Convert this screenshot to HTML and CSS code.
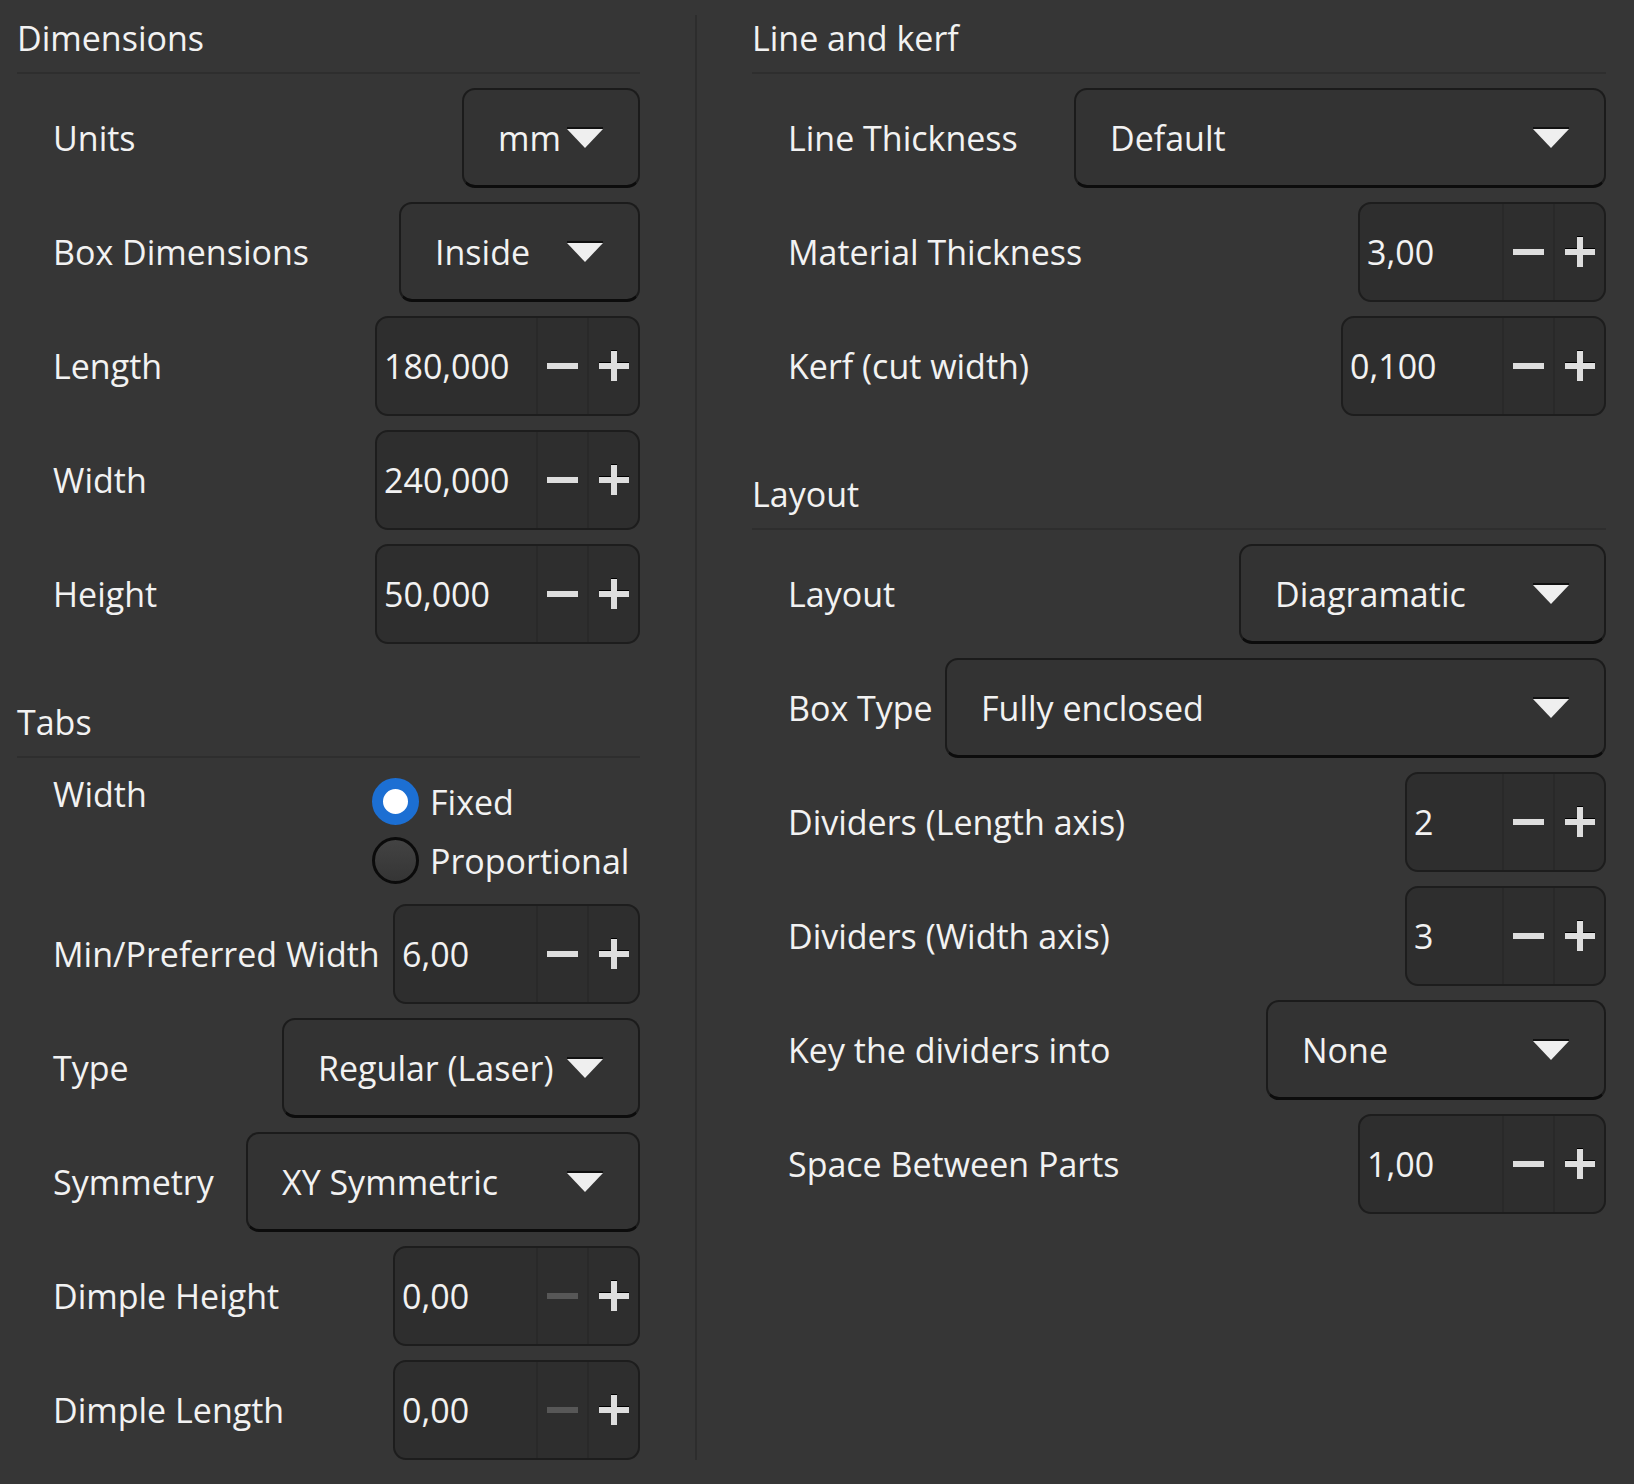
FILE: index.html
```html
<!DOCTYPE html>
<html>
<head>
<meta charset="utf-8">
<link rel="stylesheet" href="styles.css">
</head>
<body>
<div class="page">
  <div class="col col-left">
    <section class="group">
      <div class="group-title">Dimensions</div>
      <div class="rows">
        <div class="row">
          <span class="label">Units</span>
          <div class="combo combo-units"><span class="combo-text">mm</span><svg class="caret" viewBox="0 0 36 22"><rect x="0" y="0" width="36" height="2" fill="#111"/><polygon points="0,2 36,2 18,21" fill="#efefef"/></svg></div>
        </div>
        <div class="row">
          <span class="label">Box Dimensions</span>
          <div class="combo combo-boxdim"><span class="combo-text">Inside</span><svg class="caret" viewBox="0 0 36 22"><rect x="0" y="0" width="36" height="2" fill="#111"/><polygon points="0,2 36,2 18,21" fill="#efefef"/></svg></div>
        </div>
        <div class="row">
          <span class="label">Length</span>
          <div class="spin spin-265"><span class="spin-text">180,000</span><span class="spin-btn"><svg class="minus" viewBox="0 0 31 6"><rect width="31" height="6" fill="#dedede"/></svg></span><span class="spin-btn"><svg class="plus" viewBox="0 0 30 31"><rect x="12" y="0" width="6" height="1" fill="#000"/><rect x="0" y="12" width="12" height="1" fill="#000"/><rect x="18" y="12" width="12" height="1" fill="#000"/><rect x="12" y="1" width="6" height="30" fill="#dedede"/><rect x="0" y="13" width="30" height="6" fill="#dedede"/></svg></span></div>
        </div>
        <div class="row">
          <span class="label">Width</span>
          <div class="spin spin-265"><span class="spin-text">240,000</span><span class="spin-btn"><svg class="minus" viewBox="0 0 31 6"><rect width="31" height="6" fill="#dedede"/></svg></span><span class="spin-btn"><svg class="plus" viewBox="0 0 30 31"><rect x="12" y="0" width="6" height="1" fill="#000"/><rect x="0" y="12" width="12" height="1" fill="#000"/><rect x="18" y="12" width="12" height="1" fill="#000"/><rect x="12" y="1" width="6" height="30" fill="#dedede"/><rect x="0" y="13" width="30" height="6" fill="#dedede"/></svg></span></div>
        </div>
        <div class="row">
          <span class="label">Height</span>
          <div class="spin spin-265"><span class="spin-text">50,000</span><span class="spin-btn"><svg class="minus" viewBox="0 0 31 6"><rect width="31" height="6" fill="#dedede"/></svg></span><span class="spin-btn"><svg class="plus" viewBox="0 0 30 31"><rect x="12" y="0" width="6" height="1" fill="#000"/><rect x="0" y="12" width="12" height="1" fill="#000"/><rect x="18" y="12" width="12" height="1" fill="#000"/><rect x="12" y="1" width="6" height="30" fill="#dedede"/><rect x="0" y="13" width="30" height="6" fill="#dedede"/></svg></span></div>
        </div>
      </div>
    </section>

    <section class="group">
      <div class="group-title">Tabs</div>
      <div class="rows">
        <div class="row row-top">
          <span class="label">Width</span>
          <div class="radios">
            <div class="radio-item"><span class="radio radio-on"></span><span class="radio-text">Fixed</span></div>
            <div class="radio-item"><span class="radio"></span><span class="radio-text">Proportional</span></div>
          </div>
        </div>
        <div class="row">
          <span class="label">Min/Preferred Width</span>
          <div class="spin spin-247"><span class="spin-text">6,00</span><span class="spin-btn"><svg class="minus" viewBox="0 0 31 6"><rect width="31" height="6" fill="#dedede"/></svg></span><span class="spin-btn"><svg class="plus" viewBox="0 0 30 31"><rect x="12" y="0" width="6" height="1" fill="#000"/><rect x="0" y="12" width="12" height="1" fill="#000"/><rect x="18" y="12" width="12" height="1" fill="#000"/><rect x="12" y="1" width="6" height="30" fill="#dedede"/><rect x="0" y="13" width="30" height="6" fill="#dedede"/></svg></span></div>
        </div>
        <div class="row">
          <span class="label">Type</span>
          <div class="combo combo-type"><span class="combo-text">Regular (Laser)</span><svg class="caret" viewBox="0 0 36 22"><rect x="0" y="0" width="36" height="2" fill="#111"/><polygon points="0,2 36,2 18,21" fill="#efefef"/></svg></div>
        </div>
        <div class="row">
          <span class="label">Symmetry</span>
          <div class="combo combo-sym"><span class="combo-text">XY Symmetric</span><svg class="caret" viewBox="0 0 36 22"><rect x="0" y="0" width="36" height="2" fill="#111"/><polygon points="0,2 36,2 18,21" fill="#efefef"/></svg></div>
        </div>
        <div class="row">
          <span class="label">Dimple Height</span>
          <div class="spin spin-247"><span class="spin-text">0,00</span><span class="spin-btn"><svg class="minus" viewBox="0 0 31 6"><rect width="31" height="6" fill="#575757"/></svg></span><span class="spin-btn"><svg class="plus" viewBox="0 0 30 31"><rect x="12" y="0" width="6" height="1" fill="#000"/><rect x="0" y="12" width="12" height="1" fill="#000"/><rect x="18" y="12" width="12" height="1" fill="#000"/><rect x="12" y="1" width="6" height="30" fill="#dedede"/><rect x="0" y="13" width="30" height="6" fill="#dedede"/></svg></span></div>
        </div>
        <div class="row">
          <span class="label">Dimple Length</span>
          <div class="spin spin-247"><span class="spin-text">0,00</span><span class="spin-btn"><svg class="minus" viewBox="0 0 31 6"><rect width="31" height="6" fill="#575757"/></svg></span><span class="spin-btn"><svg class="plus" viewBox="0 0 30 31"><rect x="12" y="0" width="6" height="1" fill="#000"/><rect x="0" y="12" width="12" height="1" fill="#000"/><rect x="18" y="12" width="12" height="1" fill="#000"/><rect x="12" y="1" width="6" height="30" fill="#dedede"/><rect x="0" y="13" width="30" height="6" fill="#dedede"/></svg></span></div>
        </div>
      </div>
    </section>
  </div>

  <div class="vsep"></div>

  <div class="col col-right">
    <section class="group">
      <div class="group-title">Line and kerf</div>
      <div class="rows">
        <div class="row">
          <span class="label">Line Thickness</span>
          <div class="combo combo-line"><span class="combo-text">Default</span><svg class="caret" viewBox="0 0 36 22"><rect x="0" y="0" width="36" height="2" fill="#111"/><polygon points="0,2 36,2 18,21" fill="#efefef"/></svg></div>
        </div>
        <div class="row">
          <span class="label">Material Thickness</span>
          <div class="spin spin-248"><span class="spin-text">3,00</span><span class="spin-btn"><svg class="minus" viewBox="0 0 31 6"><rect width="31" height="6" fill="#dedede"/></svg></span><span class="spin-btn"><svg class="plus" viewBox="0 0 30 31"><rect x="12" y="0" width="6" height="1" fill="#000"/><rect x="0" y="12" width="12" height="1" fill="#000"/><rect x="18" y="12" width="12" height="1" fill="#000"/><rect x="12" y="1" width="6" height="30" fill="#dedede"/><rect x="0" y="13" width="30" height="6" fill="#dedede"/></svg></span></div>
        </div>
        <div class="row">
          <span class="label">Kerf (cut width)</span>
          <div class="spin spin-265"><span class="spin-text">0,100</span><span class="spin-btn"><svg class="minus" viewBox="0 0 31 6"><rect width="31" height="6" fill="#dedede"/></svg></span><span class="spin-btn"><svg class="plus" viewBox="0 0 30 31"><rect x="12" y="0" width="6" height="1" fill="#000"/><rect x="0" y="12" width="12" height="1" fill="#000"/><rect x="18" y="12" width="12" height="1" fill="#000"/><rect x="12" y="1" width="6" height="30" fill="#dedede"/><rect x="0" y="13" width="30" height="6" fill="#dedede"/></svg></span></div>
        </div>
      </div>
    </section>

    <section class="group">
      <div class="group-title">Layout</div>
      <div class="rows">
        <div class="row">
          <span class="label">Layout</span>
          <div class="combo combo-layout"><span class="combo-text">Diagramatic</span><svg class="caret" viewBox="0 0 36 22"><rect x="0" y="0" width="36" height="2" fill="#111"/><polygon points="0,2 36,2 18,21" fill="#efefef"/></svg></div>
        </div>
        <div class="row">
          <span class="label">Box Type</span>
          <div class="combo combo-boxtype"><span class="combo-text">Fully enclosed</span><svg class="caret" viewBox="0 0 36 22"><rect x="0" y="0" width="36" height="2" fill="#111"/><polygon points="0,2 36,2 18,21" fill="#efefef"/></svg></div>
        </div>
        <div class="row">
          <span class="label">Dividers (Length axis)</span>
          <div class="spin spin-201"><span class="spin-text">2</span><span class="spin-btn"><svg class="minus" viewBox="0 0 31 6"><rect width="31" height="6" fill="#dedede"/></svg></span><span class="spin-btn"><svg class="plus" viewBox="0 0 30 31"><rect x="12" y="0" width="6" height="1" fill="#000"/><rect x="0" y="12" width="12" height="1" fill="#000"/><rect x="18" y="12" width="12" height="1" fill="#000"/><rect x="12" y="1" width="6" height="30" fill="#dedede"/><rect x="0" y="13" width="30" height="6" fill="#dedede"/></svg></span></div>
        </div>
        <div class="row">
          <span class="label">Dividers (Width axis)</span>
          <div class="spin spin-201"><span class="spin-text">3</span><span class="spin-btn"><svg class="minus" viewBox="0 0 31 6"><rect width="31" height="6" fill="#dedede"/></svg></span><span class="spin-btn"><svg class="plus" viewBox="0 0 30 31"><rect x="12" y="0" width="6" height="1" fill="#000"/><rect x="0" y="12" width="12" height="1" fill="#000"/><rect x="18" y="12" width="12" height="1" fill="#000"/><rect x="12" y="1" width="6" height="30" fill="#dedede"/><rect x="0" y="13" width="30" height="6" fill="#dedede"/></svg></span></div>
        </div>
        <div class="row">
          <span class="label">Key the dividers into</span>
          <div class="combo combo-key"><span class="combo-text">None</span><svg class="caret" viewBox="0 0 36 22"><rect x="0" y="0" width="36" height="2" fill="#111"/><polygon points="0,2 36,2 18,21" fill="#efefef"/></svg></div>
        </div>
        <div class="row">
          <span class="label">Space Between Parts</span>
          <div class="spin spin-248"><span class="spin-text">1,00</span><span class="spin-btn"><svg class="minus" viewBox="0 0 31 6"><rect width="31" height="6" fill="#dedede"/></svg></span><span class="spin-btn"><svg class="plus" viewBox="0 0 30 31"><rect x="12" y="0" width="6" height="1" fill="#000"/><rect x="0" y="12" width="12" height="1" fill="#000"/><rect x="18" y="12" width="12" height="1" fill="#000"/><rect x="12" y="1" width="6" height="30" fill="#dedede"/><rect x="0" y="13" width="30" height="6" fill="#dedede"/></svg></span></div>
        </div>
      </div>
    </section>
  </div>
</div>
</body>
</html>
```

FILE: styles.css
```css
html, body {
  margin: 0;
  padding: 0;
  background: #363636;
}

body {
  font-family: "Open Sans", "Noto Sans", sans-serif;
  font-size: 34px;
  color: #f2f2f2;
  width: 1634px;
  height: 1484px;
  overflow: hidden;
}

.page {
  display: flex;
  align-items: stretch;
  padding-left: 17px;
}

.col-left {
  width: 623px;
}

.col-right {
  width: 854px;
}

.vsep {
  width: 2px;
  margin: 15px 55px 0 55px;
  background: #2d2d2d;
}

.group + .group {
  margin-top: 40px;
}

.group-title {
  padding-top: 16px;
  padding-bottom: 12px;
  line-height: 44px;
  height: 44px;
  border-bottom: 2px solid #2e2e2e;
  margin-bottom: 14px;
  white-space: nowrap;
}

.rows {
  display: flex;
  flex-direction: column;
  gap: 14px;
}

.row {
  display: flex;
  align-items: center;
  justify-content: space-between;
  height: 100px;
}

.row-top {
  align-items: flex-start;
  height: 118px;
}

.label {
  padding-left: 36px;
  line-height: 44px;
  white-space: nowrap;
}

/* combo box */
.combo {
  box-sizing: border-box;
  height: 100px;
  display: flex;
  align-items: center;
  justify-content: space-between;
  padding: 0 35px 0 34px;
  background: #333333;
  border: 2px solid #1b1b1b;
  border-bottom: 3px solid #0c0c0c;
  border-radius: 13px;
  flex-shrink: 0;
}

.combo-text {
  white-space: nowrap;
}

.caret {
  width: 36px;
  height: 22px;
  flex-shrink: 0;
}

.combo-units { width: 178px; }
.combo-boxdim { width: 241px; }
.combo-type { width: 358px; }
.combo-sym { width: 394px; }
.combo-line { width: 532px; }
.combo-layout { width: 367px; }
.combo-boxtype { width: 661px; }
.combo-key { width: 340px; }

/* spin box */
.spin {
  box-sizing: border-box;
  height: 100px;
  display: flex;
  align-items: stretch;
  background: #2e2e2e;
  border: 2px solid #1d1d1d;
  border-radius: 13px;
  flex-shrink: 0;
}

.spin-text {
  flex: 1;
  display: flex;
  align-items: center;
  padding-left: 7px;
  white-space: nowrap;
}

.spin-btn {
  width: 49px;
  display: flex;
  align-items: center;
  justify-content: center;
  border-left: 2px solid #292929;
}

.minus {
  width: 31px;
  height: 6px;
}

.plus {
  width: 30px;
  height: 31px;
  margin-top: -1px;
}

.spin-265 { width: 265px; }
.spin-247 { width: 247px; }
.spin-248 { width: 248px; }
.spin-201 { width: 201px; }

/* radios */
.radios {
  width: 268px;
  display: flex;
  flex-direction: column;
}

.radio-item {
  height: 59px;
  display: flex;
  align-items: center;
  gap: 11px;
}

.radio {
  box-sizing: border-box;
  width: 47px;
  height: 47px;
  border-radius: 50%;
  border: 3px solid #0b0b0b;
  background: linear-gradient(#434343, #353535);
  flex-shrink: 0;
}

.radio-on {
  border: 11px solid #1c6fd3;
  background: #ffffff;
}

.radio-text {
  line-height: 44px;
  white-space: nowrap;
}
```
